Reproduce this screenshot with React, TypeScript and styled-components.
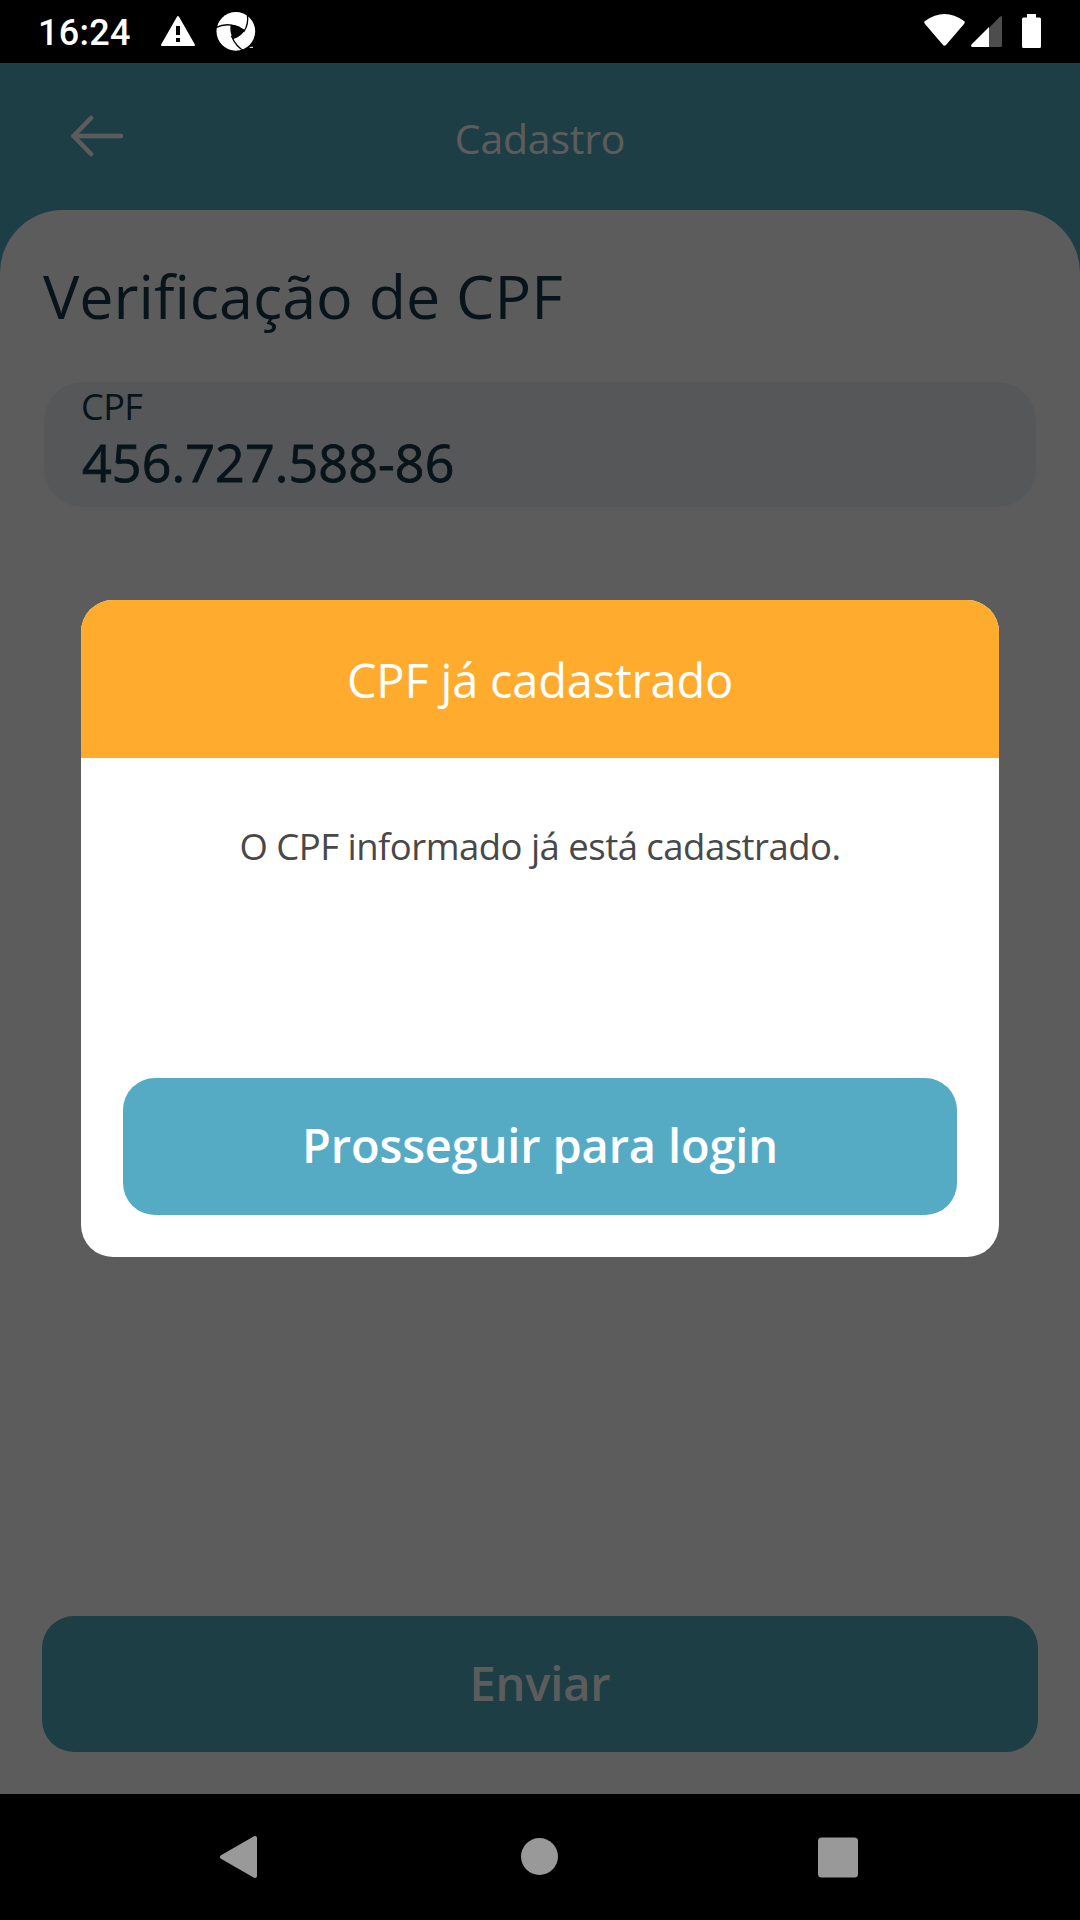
import React from 'react';
import styled, { createGlobalStyle } from 'styled-components';

const GlobalStyle = createGlobalStyle`
  *, *::before, *::after { box-sizing: border-box; }
  body { margin: 0; background: #000; }
  button { border: 0; margin: 0; }
  svg { display: block; flex: none; }
`;

const Screen = styled.div`
  width: 1080px;
  height: 1920px;
  display: flex;
  flex-direction: column;
  background: #000;
  font-family: 'Open Sans', 'Noto Sans', sans-serif;
  overflow: hidden;
`;

const StatusBar = styled.header`
  height: 63px;
  flex: none;
  display: flex;
  align-items: flex-start;
  padding: 11px 38px 0 38px;
`;

const Clock = styled.span`
  width: 123px;
  padding-top: 1px;
  color: #fff;
  font: 500 36px/42px Roboto, sans-serif;
  letter-spacing: 0.3px;
`;

const StatusGroup = styled.div<{ $gap: number; $end?: boolean }>`
  display: flex;
  gap: ${(p) => p.$gap}px;
  margin-left: ${(p) => (p.$end ? 'auto' : '0')};
`;

const AppArea = styled.main`
  position: relative;
  height: 1731px;
  flex: none;
  display: flex;
  flex-direction: column;
  background: #54abc0;
`;

const TopBar = styled.div`
  height: 147px;
  flex: none;
  display: grid;
  grid-template-columns: 200px 1fr 200px;
  align-items: center;
  padding-top: 2px;
`;

const BackButton = styled.button`
  background: none;
  padding: 0 0 4px 70px;
`;

const ScreenTitle = styled.h1`
  margin: 0;
  color: #fff;
  text-align: center;
  font-size: 41px;
  font-weight: 400;
  line-height: 56px;
  letter-spacing: -0.2px;
`;

const Sheet = styled.section`
  flex: 1;
  display: flex;
  flex-direction: column;
  align-items: stretch;
  padding: 44px 42px 42px;
  border-radius: 63px 63px 0 0;
  background: #fff;
`;

const Heading = styled.h2`
  margin: 0 0 45px 1px;
  color: #163848;
  font-size: 61px;
  font-weight: 400;
  line-height: 83px;
  font-variant-ligatures: common-ligatures;
`;

const Field = styled.label`
  height: 125px;
  margin: 0 2px;
  padding: 5px 37px 0;
  border-radius: 38px;
  background: #eff2f6;
  color: #163848;
  display: flex;
  flex-direction: column;
`;

const FieldLabel = styled.span`
  font-size: 36px;
  line-height: 40px;
  letter-spacing: -0.5px;
`;

const FieldValue = styled.span`
  font-size: 52px;
  line-height: 70px;
  letter-spacing: 0.1px;
  padding-left: 1px;
  -webkit-text-stroke: 0.8px currentColor;
`;

const PrimaryButton = styled.button<{ $height: number; $background: string }>`
  height: ${(p) => p.$height}px;
  margin-top: auto;
  padding: 0 0 3px;
  border-radius: 32px;
  background: ${(p) => p.$background};
  color: #fff;
  font-family: inherit;
  font-size: 47px;
  font-weight: 600;
  line-height: 64px;
  letter-spacing: -0.16px;
`;

const Scrim = styled.div`
  position: absolute;
  inset: 0;
  display: flex;
  justify-content: center;
  align-items: flex-start;
  padding-top: 537px;
  background: rgba(0, 0, 0, 0.64);
`;

const Dialog = styled.div`
  width: 918px;
  height: 657px;
  display: flex;
  flex-direction: column;
  overflow: hidden;
  border-radius: 32px;
  background: #fff;
`;

const DialogTitle = styled.h3`
  height: 158px;
  flex: none;
  margin: 0;
  background: #ffab2d;
  color: #fff;
  text-align: center;
  font-size: 47px;
  font-weight: 400;
  line-height: 160px;
  letter-spacing: -0.2px;
`;

const DialogBody = styled.div`
  flex: 1;
  display: flex;
  flex-direction: column;
  padding: 63px 42px 42px;
`;

const Message = styled.p`
  margin: 0;
  color: #484849;
  text-align: center;
  font-size: 36.5px;
  line-height: 50px;
  letter-spacing: -0.52px;
`;

const NavBar = styled.nav`
  height: 126px;
  flex: none;
  display: flex;
  justify-content: space-between;
  align-items: center;
  padding: 0 221px 0 219px;
`;

function WarningIcon() {
  return (
    <svg width="34" height="46" viewBox="161 11 34 46">
      <path d="M178 17 L194 45 H162 Z" fill="#fff" stroke="#fff" strokeWidth="2" strokeLinejoin="round" />
      <path d="M176 26h4v9h-4z M176 38h4v4h-4z" fill="#000" />
    </svg>
  );
}

function ApertureIcon() {
  return (
    <svg width="40" height="41" viewBox="648 34 120 123">
      <circle cx="707.500" cy="95" r="58" fill="#fff" />
      <path d="M692 75 Q714 75 734 93 Q721 111 700 118 Q688 98 692 75Z" fill="#000" />
      <g fill="none" stroke="#000" strokeWidth="4">
        <path d="M645 85 Q688 62 734 93" />
        <path d="M742 45 Q747 73 731 97" />
        <path d="M737 156 Q708 143 694 108" />
      </g>
      <path d="M749 143h10" stroke="#fff" strokeWidth="3" />
    </svg>
  );
}

function WifiIcon() {
  return (
    <svg width="42" height="36" viewBox="924 11 42 36">
      <path d="M925 21 Q944.500 7 964 21 Q965.500 22 964 24 L946 45 Q944.500 46.500 943 45 L925 24 Q923.500 22 925 21Z" fill="#fff" />
    </svg>
  );
}

function SignalIcon() {
  return (
    <svg width="32" height="37" viewBox="971 11 32 37">
      <path d="M989 28 L1000 16.500 Q1002 15.500 1002 17.500 V45.500 Q1002 47 1000.500 47 H989Z" fill="#4d4d4d" />
      <path d="M989 27 V47 H972 Q970.500 46.500 971.500 44.500Z" fill="#fff" />
    </svg>
  );
}

function BatteryIcon() {
  return (
    <svg width="39" height="38" viewBox="1003 11 39 38">
      <path d="M1027 14h9v3.500h3.500q1.500 0 1.500 1.500v27.500q0 1.500-1.500 1.500h-16q-1.500 0-1.500-1.500v-27.500q0-1.500 1.500-1.500h3.500z" fill="#fff" />
    </svg>
  );
}

function ArrowIcon() {
  return (
    <svg width="54" height="42" viewBox="0 0 54 42" fill="none" stroke="#fff" strokeWidth="4.600" strokeLinecap="round" strokeLinejoin="round">
      <path d="M51 21H3.500 M21 3L3.500 21L21 39" />
    </svg>
  );
}

export default function App() {
  return (
    <Screen>
      <GlobalStyle />
      <StatusBar>
        <Clock>16:24</Clock>
        <StatusGroup $gap={21}>
          <WarningIcon />
          <ApertureIcon />
        </StatusGroup>
        <StatusGroup $gap={5} $end>
          <WifiIcon />
          <StatusGroup $gap={0}>
            <SignalIcon />
            <BatteryIcon />
          </StatusGroup>
        </StatusGroup>
      </StatusBar>
      <AppArea>
        <TopBar>
          <BackButton aria-label="Voltar"><ArrowIcon /></BackButton>
          <ScreenTitle>Cadastro</ScreenTitle>
        </TopBar>
        <Sheet>
          <Heading>Verificação de CPF</Heading>
          <Field>
            <FieldLabel>CPF</FieldLabel>
            <FieldValue>456.727.588-86</FieldValue>
          </Field>
          <PrimaryButton $height={136} $background="#54abc0">Enviar</PrimaryButton>
        </Sheet>
        <Scrim>
          <Dialog>
            <DialogTitle>CPF já cadastrado</DialogTitle>
            <DialogBody>
              <Message>O CPF informado já está cadastrado.</Message>
              <PrimaryButton $height={137} $background="#56abc4">Prosseguir para login</PrimaryButton>
            </DialogBody>
          </Dialog>
        </Scrim>
      </AppArea>
      <NavBar>
        <svg width="39" height="44" viewBox="0 0 39 44">
          <path d="M3 22 L36 3 V41 Z" fill="#999" stroke="#999" strokeWidth="4" strokeLinejoin="round" />
        </svg>
        <svg width="38" height="38" viewBox="0 0 38 38" overflow="visible"><circle cx="20.500" cy="18.500" r="18.500" fill="#999" /></svg>
        <svg width="41" height="41" viewBox="0 0 41 41"><rect width="40" height="40" rx="3.500" y="0.500" fill="#999" /></svg>
      </NavBar>
    </Screen>
  );
}
